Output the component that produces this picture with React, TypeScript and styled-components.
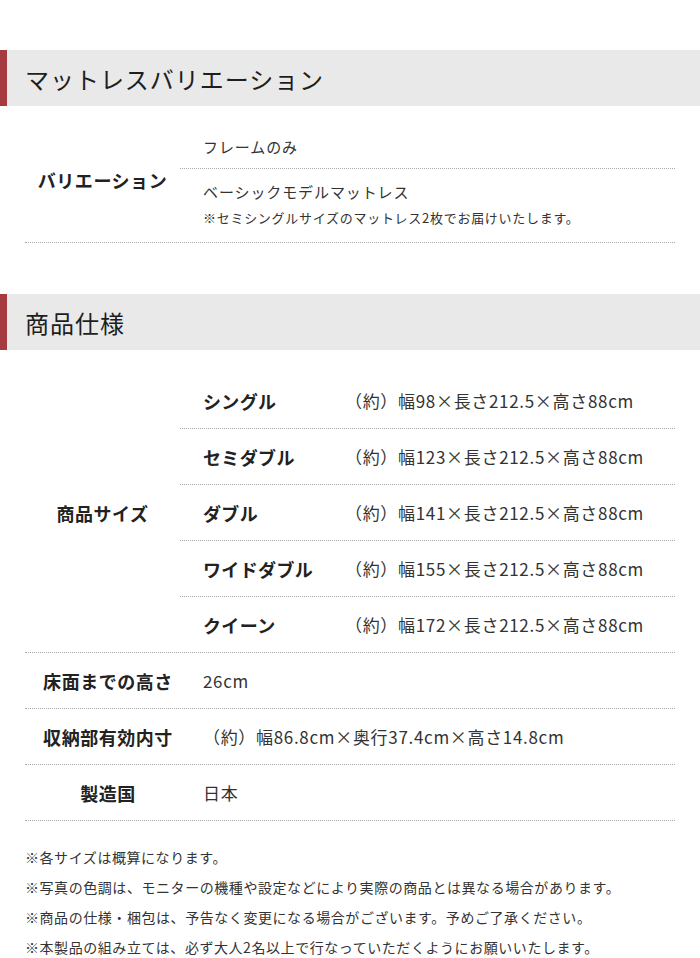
import React from 'react';
import styled, { createGlobalStyle } from 'styled-components';

const GlobalStyle = createGlobalStyle`
  body {
    margin: 0;
    background: #fff;
    font-family: "Noto Sans CJK JP", "Noto Sans", sans-serif;
    color: #333;
  }
`;

const Page = styled.div`
  width: 700px;
  padding-top: 50px;
`;

const HeadingWrap = styled.div`
  padding-top: 51px;
`;

const Heading = styled.h2`
  margin: 0;
  height: 56px;
  display: flex;
  align-items: center;
  padding-left: 18px;
  background: #e9e9e9;
  border-left: 7px solid #a63b3f;
  font-size: 24px;
  font-weight: 400;
  letter-spacing: 0.04em;
  color: #1e1e1e;
`;

const Table = styled.div<{ $top: number }>`
  margin: ${(p) => p.$top}px 25px 0;
`;

const Row = styled.div<{ $labelW?: number }>`
  display: grid;
  grid-template-columns: ${(p) => p.$labelW ?? 155}px 1fr;
  border-bottom: 1px dotted #aaa;
  min-height: 55px;
`;

const Label = styled.div<{ $lift?: number }>`
  display: flex;
  align-items: center;
  justify-content: center;
  padding-bottom: ${(p) => p.$lift ?? 0}px;
  font-size: 18px;
  font-weight: 700;
  letter-spacing: 0.03em;
  color: #222;
  white-space: nowrap;
`;

const Value = styled.div<{ $pad?: number }>`
  display: flex;
  align-items: center;
  padding-left: ${(p) => p.$pad ?? 23}px;
  font-size: 17px;
  letter-spacing: 0.04em;
  color: #333;
`;

const Options = styled.div`
  display: flex;
  flex-direction: column;
`;

const Option = styled.div<{ $h: number; $last?: boolean; $lift?: number }>`
  height: ${(p) => p.$h}px;
  box-sizing: border-box;
  padding: 0 0 ${(p) => p.$lift ?? 0}px 23px;
  display: flex;
  flex-direction: column;
  justify-content: center;
  border-bottom: ${(p) => (p.$last ? 'none' : '1px dotted #aaa')};
`;

const OptionName = styled.div`
  font-size: 15px;
  letter-spacing: 0.06em;
  color: #333;
  line-height: 26px;
`;

const OptionNote = styled.div`
  font-size: 13px;
  letter-spacing: 0.055em;
  color: #333;
  line-height: 26px;
`;

const SizeRow = styled.div<{ $last?: boolean }>`
  height: 55px;
  display: grid;
  grid-template-columns: 142px 1fr;
  align-items: center;
  padding-left: 23px;
  border-bottom: ${(p) => (p.$last ? 'none' : '1px dotted #aaa')};
`;

const SizeName = styled.div`
  font-size: 18px;
  font-weight: 700;
  letter-spacing: 0.02em;
  color: #222;
`;

const SizeValue = styled.div`
  font-size: 17px;
  letter-spacing: 0.04em;
  color: #333;
`;

const Notes = styled.div`
  margin: 21px 25px 0;
`;

const Note = styled.p`
  margin: 0;
  font-size: 14px;
  line-height: 30px;
  letter-spacing: 0.04em;
  color: #333;
`;

const sizes = [
  { name: 'シングル', w: '98' },
  { name: 'セミダブル', w: '123' },
  { name: 'ダブル', w: '141' },
  { name: 'ワイドダブル', w: '155' },
  { name: 'クイーン', w: '172' },
];

const notes = [
  '※各サイズは概算になります。',
  '※写真の色調は、モニターの機種や設定などにより実際の商品とは異なる場合があります。',
  '※商品の仕様・梱包は、予告なく変更になる場合がございます。予めご了承ください。',
  '※本製品の組み立ては、必ず大人2名以上で行なっていただくようにお願いいたします。',
];

export default function App() {
  return (
    <Page>
      <GlobalStyle />
      <Heading>マットレスバリエーション</Heading>
      <Table $top={19}>
        <Row>
          <Label $lift={8}>バリエーション</Label>
          <Options>
            <Option $h={44}>
              <OptionName>フレームのみ</OptionName>
            </Option>
            <Option $h={73} $lift={1} $last>
              <OptionName>ベーシックモデルマットレス</OptionName>
              <OptionNote>※セミシングルサイズのマットレス2枚でお届けいたします。</OptionNote>
            </Option>
          </Options>
        </Row>
      </Table>

      <HeadingWrap>
        <Heading>商品仕様</Heading>
      </HeadingWrap>

      <Table $top={23}>
        <Row>
          <Label>商品サイズ</Label>
          <Options>
            {sizes.map((s, i) => (
              <SizeRow key={s.name} $last={i === sizes.length - 1}>
                <SizeName>{s.name}</SizeName>
                <SizeValue>（約）幅{s.w}×長さ212.5×高さ88cm</SizeValue>
              </SizeRow>
            ))}
          </Options>
        </Row>
        <Row $labelW={166}>
          <Label>床面までの高さ</Label>
          <Value $pad={12}>26cm</Value>
        </Row>
        <Row $labelW={166}>
          <Label>収納部有効内寸</Label>
          <Value $pad={12}>（約）幅86.8cm×奥行37.4cm×高さ14.8cm</Value>
        </Row>
        <Row $labelW={166}>
          <Label>製造国</Label>
          <Value $pad={12}>日本</Value>
        </Row>
      </Table>

      <Notes>
        {notes.map((n) => (
          <Note key={n}>{n}</Note>
        ))}
      </Notes>
    </Page>
  );
}
